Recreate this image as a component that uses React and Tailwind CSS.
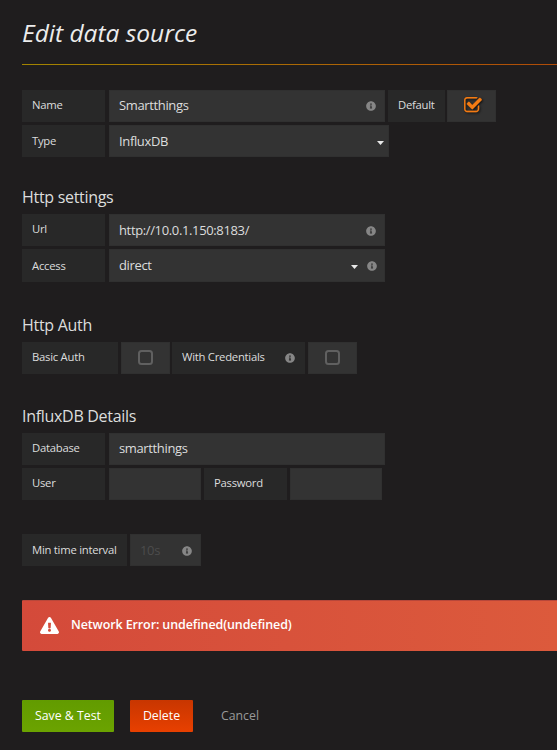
import React from "react";
import { FaInfoCircle, FaExclamationTriangle } from "react-icons/fa";

const edge = "shadow-[inset_0_0_0_1px_#303030]";

function Label({ className = "", children }) {
  return (
    <div className={`flex h-8 shrink-0 items-center bg-[#282828] px-2.5 text-[11.3px] tracking-[-0.26px] whitespace-nowrap text-[#dcdddd] ${className}`}>
      {children}
    </div>
  );
}

function Field({ className = "", children }) {
  return (
    <div className={`flex h-8 shrink-0 items-center bg-[#333333] pl-2.5 text-[13px] tracking-[-0.36px] whitespace-nowrap text-[#dcdddd] ${edge} ${className}`}>
      {children}
    </div>
  );
}

function Info({ className = "" }) {
  return <FaInfoCircle className={`size-[10px] text-[#868686] ${className}`} />;
}

function Caret({ className = "" }) {
  return (
    <svg viewBox="0 0 7 4" className={`h-1 w-[7px] fill-[#e8e8e8] ${className}`}>
      <path d="M0 0h7L3.5 4z" />
    </svg>
  );
}

function Checkbox({ checked = false, className = "" }) {
  return (
    <div className={`flex h-8 w-[49px] shrink-0 items-center justify-center bg-[#333333] ${edge} ${className}`}>
      {checked ? (
        <svg viewBox="0 0 1664 1536" className="-mt-0.5 ml-[3px] h-[16.5px] w-[18px] fill-[#f47c14] stroke-[#f47c14] stroke-[20] drop-shadow-[1px_1px_1px_#111111]">
          <path d="M1408 802v318q0 119-84.5 203.5t-203.5 84.5h-832q-119 0-203.5-84.5t-84.5-203.5v-832q0-119 84.5-203.5t203.5-84.5h832q63 0 117 25 15 7 18 23 3 17-9 29l-49 49q-10 10-23 10-3 0-9-2-23-6-45-6h-832q-66 0-113 47t-47 113v832q0 66 47 113t113 47h832q66 0 113-47t47-113v-254q0-13 9-22l64-64q10-10 23-10 6 0 12 3 20 8 20 29zm231-489l-814 814q-24 24-57 24t-57-24l-430-430q-24-24-24-57t24-57l110-110q24-24 57-24t57 24l263 263 647-647q24-24 57-24t57 24l110 110q24 24 24 57t-24 57z" />
        </svg>
      ) : (
        <span className="-mt-px size-[15px] rounded-[3.5px] border-2 border-[#606060]" />
      )}
    </div>
  );
}

function Heading({ className = "", children }) {
  return <h3 className={`h-6 text-[16px] leading-6 tracking-[-0.3px] whitespace-nowrap text-[#dcdddd] ${className}`}>{children}</h3>;
}

export default function App() {
  return (
    <main className="h-[750px] w-[557px] overflow-hidden bg-[#1f1d1e] pl-[22px] font-['Open_Sans','Noto_Sans',sans-serif]">
      <h1 className="h-16 pt-4 text-[24.5px] leading-[34px] text-[#ececec] italic">Edit data source</h1>
      <div className="h-px bg-linear-to-r from-[#a18400] to-[#b04b08]" />

      <div className="mt-[25px] flex">
        <Label className="w-[83px] pb-px">Name</Label>
        <Field className="ml-1 w-[276px]">
          Smartthings
          <Info className="mr-[9px] ml-auto" />
        </Field>
        <Label className="ml-[3px] w-[57px] pb-px tracking-[-0.26px]">Default</Label>
        <Checkbox checked className="ml-[2px]" />
      </div>
      <div className="mt-[3px] flex">
        <Label className="w-[83px]">Type</Label>
        <Field className="ml-1 w-[280px] pt-px">
          InfluxDB
          <Caret className="mt-[2px] mr-[5px] ml-auto" />
        </Field>
      </div>

      <Heading className="mt-[28px]">Http settings</Heading>
      <div className="mt-[5px] flex">
        <Label className="w-[83px] pb-px">Url</Label>
        <Field className="ml-1 w-[276px] pt-px">
          http://10.0.1.150:8183/
          <Info className="mr-[9px] ml-auto" />
        </Field>
      </div>
      <div className="mt-[3px] flex">
        <Label className="h-[33px] w-[83px] pt-px">Access</Label>
        <Field className="ml-1 h-[33px] w-[276px] pt-px">
          direct
          <Caret className="mt-[2px] mr-[9px] ml-auto" />
          <Info className="mr-[8px]" />
        </Field>
      </div>

      <Heading className="mt-[31px]">Http Auth</Heading>
      <div className="mt-[5px] flex">
        <Label className="w-[96px] pb-px">Basic Auth</Label>
        <Checkbox className="ml-[3px]" />
        <Label className="ml-[2px] w-[133px] pb-px">
          With Credentials
          <Info className="ml-auto" />
        </Label>
        <Checkbox className="ml-[3px]" />
      </div>

      <Heading className="mt-[30px]">InfluxDB Details</Heading>
      <div className="mt-[5px] flex">
        <Label className="w-[83px] pb-px">Database</Label>
        <Field className="ml-1 w-[276px] pb-px">smartthings</Field>
      </div>
      <div className="mt-[3px] flex">
        <Label className="w-[83px] pb-px">User</Label>
        <Field className="ml-1 w-[92px]" />
        <Label className="ml-[3px] w-[83px] pb-px">Password</Label>
        <Field className="ml-[3px] w-[92px]" />
      </div>
      <div className="mt-[34px] flex">
        <Label className="w-[105px] pt-px">Min time interval</Label>
        <Field className="ml-[3px] w-[71px] pt-px tracking-[-0.1px]">
          <span className="text-[#4c4c4c]">10s</span>
          <Info className="mr-[9px] ml-auto" />
        </Field>
      </div>

      <div className="mt-[34px] flex h-[51px] items-center rounded-l-[1px] border-t border-[#b8473a] bg-linear-to-r from-[#d44a3a] to-[#dc5a3c] pl-[18px] text-white">
        <FaExclamationTriangle className="-mt-[2px] size-[19px]" />
        <span className="-mt-[2px] ml-3 text-[12.5px] font-semibold tracking-[-0.11px] whitespace-nowrap">Network Error: undefined(undefined)</span>
      </div>

      <div className="mt-[49px] flex h-8 items-center text-[12.3px] whitespace-nowrap">
        <button className="h-8 w-[92px] rounded-[1px] bg-linear-to-b from-[#629b00] to-[#6ba300] text-white">Save &amp; Test</button>
        <button className="ml-4 h-8 w-[63px] rounded-[1px] bg-linear-to-b from-[#c83600] to-[#e84000] text-white">Delete</button>
        <button className="ml-[28px] text-[#999999]">Cancel</button>
      </div>
    </main>
  );
}
